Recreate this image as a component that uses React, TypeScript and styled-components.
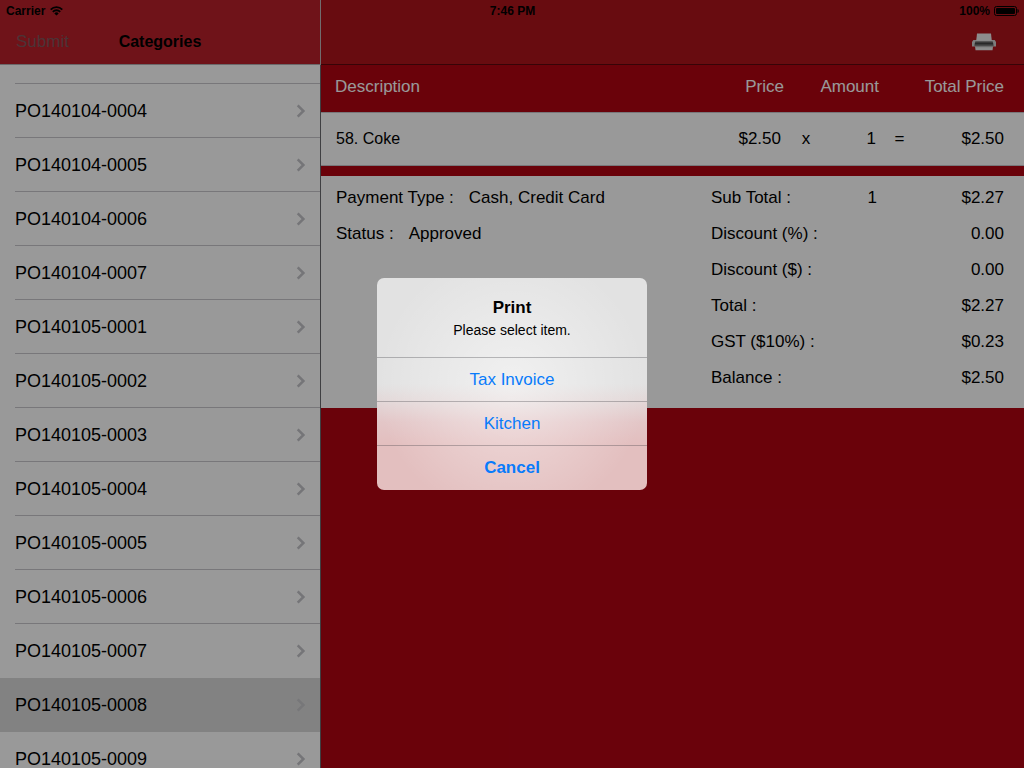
import React from "react";
import styled, { createGlobalStyle } from "styled-components";

const GlobalStyle = createGlobalStyle`
  *, *::before, *::after { box-sizing: border-box; }
  body {
    margin: 0;
    font-family: "Liberation Sans", Arial, Helvetica, sans-serif;
    font-size: 17px;
    line-height: 20px;
    color: #000;
  }
  h1, h2, p, ul, dl, dt, dd { margin: 0; padding: 0; font-size: inherit; }
  button { font: inherit; border: 0; padding: 0; background: none; cursor: pointer; }
`;

const Screen = styled.div`
  position: relative;
  display: flex;
  height: 100vh;
  overflow: hidden;
  background: #b10412;
`;

/* Status bar lies over both navigation bars */
const StatusBar = styled.div`
  position: absolute;
  top: 0;
  left: 0;
  right: 0;
  display: grid;
  grid-template-columns: 1fr auto 1fr;
  align-items: center;
  height: 22px;
  padding: 0 5px 0 6px;
  font-size: 12px;
  line-height: 22px;
  font-weight: bold;
`;

const StatusGroup = styled.div<{ $end?: boolean }>`
  display: flex;
  align-items: center;
  justify-content: ${(p) => (p.$end ? "flex-end" : "flex-start")};
  gap: ${(p) => (p.$end ? 4 : 5)}px;
`;

const Sidebar = styled.aside`
  display: flex;
  flex-direction: column;
  flex: 0 0 321px;
`;

const NavBar = styled.header<{ $side?: boolean }>`
  flex: none;
  display: grid;
  grid-template-columns: 1fr auto 1fr;
  align-items: center;
  height: 65px;
  padding: 20px ${(p) => (p.$side ? 16 : 28)}px 0 16px;
  background: ${(p) => (p.$side ? "#b9202a" : "#ad141c")};
  border-bottom: 1px solid ${(p) => (p.$side ? "#b4b0b2" : "#5c080c")};
  border-right: ${(p) => (p.$side ? "1px solid #bdb6b8" : "0")};
`;

const NavTitle = styled.h1`
  font-size: 16px;
  font-weight: bold;
`;

const SubmitButton = styled.button`
  justify-self: start;
  &:disabled { color: rgba(105, 105, 108, 0.75); }
`;

const PrintButton = styled.button`
  grid-column: 3;
  justify-self: end;
  display: flex;
`;

const OrderList = styled.ul`
  flex: 1;
  min-height: 0;
  overflow: hidden;
  list-style: none;
  background: #fff;
  border-right: 1px solid #6a6a6e;

  &::before {
    content: "";
    display: block;
    height: 19px;
    margin-left: 15px;
    border-bottom: 1px solid #c8c7cc;
  }
`;

const OrderItem = styled.li<{ $selected?: boolean; $line?: boolean }>`
  padding-left: 15px;
  background: ${(p) => (p.$selected ? "#d9d9d9" : "#fff")};
  a {
    display: flex;
    align-items: center;
    justify-content: space-between;
    height: 54px;
    padding-right: 14px;
    border-bottom: 1px solid ${(p) => (p.$line ? "#c8c7cc" : "transparent")};
    font-size: 18px;
    color: inherit;
    text-decoration: none;
  }
`;

const Detail = styled.main`
  flex: 1;
  min-width: 0;
  display: flex;
  flex-direction: column;
`;

const ItemTable = styled.table`
  width: 100%;
  table-layout: fixed;
  border-spacing: 0;
  margin-bottom: 10px;
`;

const Col = styled.col<{ $w?: number }>`
  width: ${(p) => (p.$w ? `${p.$w}px` : "auto")};
`;

const HeadCell = styled.th<{ $align?: string }>`
  height: 47px;
  padding: 0 0 4px;
  font-weight: normal;
  color: #fff;
  text-align: ${(p) => p.$align || "right"};
  &:first-child { padding-left: 14px; }
  &:last-child { padding-right: 20px; }
`;

const Cell = styled.td<{ $align?: string; $small?: boolean }>`
  height: 54px;
  padding: 0 ${(p) => (p.$align ? 0 : 3)}px 0 0;
  background: #fff;
  border-top: 1px solid #c8c7cc;
  border-bottom: 1px solid #c8c7cc;
  text-align: ${(p) => p.$align || "right"};
  font-size: ${(p) => (p.$small ? 16 : 17)}px;
  &:first-child { padding-left: 15px; }
  &:last-child { padding-right: 20px; }
`;

const Summary = styled.section`
  display: flex;
  padding: 4px 20px 12px 15px;
  background: #fff;
`;

const Facts = styled.dl`
  flex: 1;
`;

const Fact = styled.div`
  display: flex;
  align-items: center;
  gap: 15px;
  height: 36px;
`;

const Totals = styled.dl`
  flex: 0 0 293px;
`;

const TotalRow = styled.div`
  display: grid;
  grid-template-columns: 1fr 40px 127px;
  align-items: center;
  height: 36px;
  dd { text-align: right; }
  dd:last-child { grid-column: 3; }
`;

/* Dimming layer behind the alert */
const Scrim = styled.div`
  position: absolute;
  inset: 0;
  display: flex;
  align-items: center;
  justify-content: center;
  background: rgba(0, 0, 0, 0.4);
`;

const Alert = styled.div`
  width: 270px;
  overflow: hidden;
  border-radius: 7px;
  text-align: center;
  background:
    radial-gradient(circle 135px at 50% 50%, rgba(255, 255, 255, 0.5), rgba(255, 255, 255, 0)),
    linear-gradient(#e2e2e2 50%, #e3d8d8 58%, #e3c6c7 68%, #e3bfbf 78%);
`;

const AlertText = styled.div`
  padding: 20px 15px 17px;
`;

const AlertTitle = styled.h2`
  font-weight: bold;
`;

const AlertMessage = styled.p`
  margin-top: 2px;
  font-size: 14px;
`;

const AlertButton = styled.button<{ $strong?: boolean }>`
  display: block;
  width: 100%;
  height: ${(p) => (p.$strong ? 45 : 44)}px;
  border-top: 1px solid rgba(60, 60, 66, 0.32);
  color: #087bfb;
  font-weight: ${(p) => (p.$strong ? "bold" : "normal")};
`;

const WifiIcon = () => (
  <svg width="13" height="10" viewBox="0 0 13 10" aria-hidden="true">
    <g fill="none" stroke="#000" strokeWidth="1.8">
      <path d="M0.7 3.600a8.200 8.200 0 0 1 11.600 0" />
      <path d="M2.800 5.800a5.200 5.200 0 0 1 7.400 0" />
    </g>
    <path d="M6.500 9.500L4.300 7.400a3.200 3.200 0 0 1 4.400 0z" />
  </svg>
);

const BatteryIcon = () => (
  <svg width="25" height="10" viewBox="0 0 25 10" aria-hidden="true">
    <rect x="0.5" y="0.5" width="22" height="9" rx="2" fill="none" stroke="#000" />
    <rect x="2" y="2" width="19" height="6" rx="1" />
    <path d="M23.500 3v4c1-.4 1.300-1.200 1.300-2s-.3-1.600-1.300-2z" />
  </svg>
);

const PrinterIcon = () => (
  <svg width="24" height="18" viewBox="0 0 24 18" aria-hidden="true">
    <defs>
      <linearGradient id="slot" x1="0" y1="0" x2="0" y2="1">
        <stop offset="0" stopColor="#a8a8a8" />
        <stop offset="0.45" stopColor="#3c3c3c" />
        <stop offset="1" stopColor="#8a8a8a" />
      </linearGradient>
    </defs>
    <path d="M1.300 7h21.400L24 9v4.500H0V9z" fill="#d0d0d0" />
    <path d="M5 0.500h14l.8 7.200H4.200z" fill="#ececec" />
    <path d="M3.300 8h17.400l1 5H2.300z" fill="url(#slot)" />
    <path d="M3 13.300h18l-.5 4h-17z" fill="#ececec" />
    <path d="M3 13h18v1.200H3z" fill="#b4b4b4" />
  </svg>
);

const Chevron = ({ faint }: { faint?: boolean }) => (
  <svg width="10" height="14" viewBox="0 0 10 14" aria-hidden="true">
    <path d="M1.700 1.300L7.400 7l-5.700 5.700" fill="none" stroke={faint ? "#c6c6ca" : "#c3c3c8"} strokeWidth="2.500" />
  </svg>
);

const orders = [
  "PO140104-0004", "PO140104-0005", "PO140104-0006", "PO140104-0007",
  "PO140105-0001", "PO140105-0002", "PO140105-0003", "PO140105-0004",
  "PO140105-0005", "PO140105-0006", "PO140105-0007", "PO140105-0008",
  "PO140105-0009",
];
const selectedIndex = 11;

const totals = [
  { label: "Sub Total :", count: "1", value: "$2.27" },
  { label: "Discount (%) :", value: "0.00" },
  { label: "Discount ($) :", value: "0.00" },
  { label: "Total :", value: "$2.27" },
  { label: "GST ($10%) :", value: "$0.23" },
  { label: "Balance :", value: "$2.50" },
];

export default function App() {
  return (
    <>
      <GlobalStyle />
      <Screen>
        <Sidebar>
          <NavBar $side>
            <SubmitButton disabled>Submit</SubmitButton>
            <NavTitle>Categories</NavTitle>
          </NavBar>
          <OrderList>
            {orders.map((id, i) => (
              <OrderItem
                key={id}
                $selected={i === selectedIndex}
                $line={i !== selectedIndex && i !== selectedIndex - 1}
              >
                <a href={`#${id}`}>
                  {id}
                  <Chevron faint={i === selectedIndex} />
                </a>
              </OrderItem>
            ))}
          </OrderList>
        </Sidebar>

        <Detail>
          <NavBar>
            <PrintButton aria-label="Print">
              <PrinterIcon />
            </PrintButton>
          </NavBar>
          <ItemTable>
            <colgroup>
              <Col />
              <Col $w={63} />
              <Col $w={44} />
              <Col $w={51} />
              <Col $w={41} />
              <Col $w={104} />
            </colgroup>
            <thead>
              <tr>
                <HeadCell $align="left">Description</HeadCell>
                <HeadCell>Price</HeadCell>
                <HeadCell colSpan={2}>Amount</HeadCell>
                <HeadCell as="td" />
                <HeadCell>Total Price</HeadCell>
              </tr>
            </thead>
            <tbody>
              <tr>
                <Cell $align="left" $small>58. Coke</Cell>
                <Cell>$2.50</Cell>
                <Cell $align="center">x</Cell>
                <Cell>1</Cell>
                <Cell $align="center">=</Cell>
                <Cell>$2.50</Cell>
              </tr>
            </tbody>
          </ItemTable>
          <Summary>
            <Facts>
              <Fact>
                <dt>Payment Type :</dt>
                <dd>Cash, Credit Card</dd>
              </Fact>
              <Fact>
                <dt>Status :</dt>
                <dd>Approved</dd>
              </Fact>
            </Facts>
            <Totals>
              {totals.map((t) => (
                <TotalRow key={t.label}>
                  <dt>{t.label}</dt>
                  {t.count && <dd>{t.count}</dd>}
                  <dd>{t.value}</dd>
                </TotalRow>
              ))}
            </Totals>
          </Summary>
        </Detail>

        <StatusBar>
          <StatusGroup>
            Carrier
            <WifiIcon />
          </StatusGroup>
          <span>7:46 PM</span>
          <StatusGroup $end>
            100%
            <BatteryIcon />
          </StatusGroup>
        </StatusBar>

        <Scrim>
          <Alert role="alertdialog" aria-modal="true" aria-labelledby="alert-title" aria-describedby="alert-message">
            <AlertText>
              <AlertTitle id="alert-title">Print</AlertTitle>
              <AlertMessage id="alert-message">Please select item.</AlertMessage>
            </AlertText>
            <AlertButton>Tax Invoice</AlertButton>
            <AlertButton>Kitchen</AlertButton>
            <AlertButton $strong>Cancel</AlertButton>
          </Alert>
        </Scrim>
      </Screen>
    </>
  );
}
